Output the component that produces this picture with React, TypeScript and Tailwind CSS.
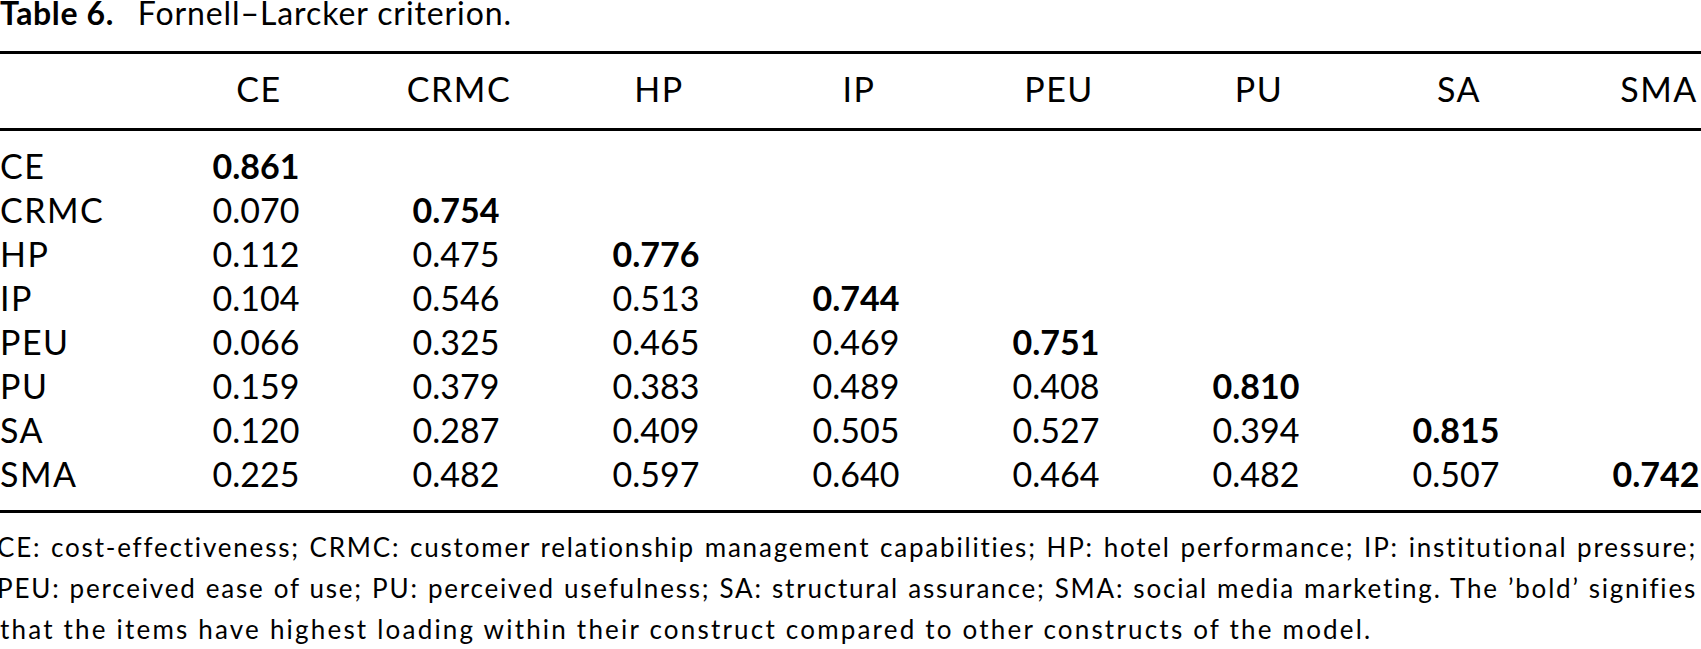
import React from "react";

const headers = ["CE", "CRMC", "HP", "IP", "PEU", "PU", "SA", "SMA"];

const rows: [string, string[]][] = [
  ["CE", ["0.861"]],
  ["CRMC", ["0.070", "0.754"]],
  ["HP", ["0.112", "0.475", "0.776"]],
  ["IP", ["0.104", "0.546", "0.513", "0.744"]],
  ["PEU", ["0.066", "0.325", "0.465", "0.469", "0.751"]],
  ["PU", ["0.159", "0.379", "0.383", "0.489", "0.408", "0.810"]],
  ["SA", ["0.120", "0.287", "0.409", "0.505", "0.527", "0.394", "0.815"]],
  ["SMA", ["0.225", "0.482", "0.597", "0.640", "0.464", "0.482", "0.507", "0.742"]],
];

export default function App() {
  return (
    <div className="w-[1701px] h-[649px] overflow-hidden bg-white text-black font-['Lato','Open_Sans',sans-serif]">
      <div className="h-[51px] leading-[26px] whitespace-nowrap">
        <span className="font-bold text-[32px] tracking-[0.6px]">Table 6.</span>
        <span className="ml-[24px] text-[32px] tracking-[0.9px]">Fornell–Larcker criterion.</span>
      </div>
      <div className="w-[1756px] h-[3px] bg-black" />
      <div className="grid grid-cols-[156px_repeat(8,200px)] pt-[13px] pb-[17px] text-[34px] leading-[44px]">
        <div />
        {headers.map((h) => (
          <div key={h} className="text-center tracking-[1.5px] pl-[6px]">
            {h}
          </div>
        ))}
      </div>
      <div className="w-[1756px] h-[3px] bg-black" />
      <div className="pt-[13px] pb-[14px] text-[34px] leading-[44px]">
        {rows.map(([label, vals]) => (
          <div key={label} className="grid grid-cols-[156px_repeat(8,200px)] h-[44px]">
            <div className="whitespace-nowrap tracking-[1.5px]">{label}</div>
            {vals.map((v, i) => (
              <div
                key={i}
                className={
                  i === vals.length - 1 ? "text-center font-bold" : "text-center"
                }
              >
                {v}
              </div>
            ))}
          </div>
        ))}
      </div>
      <div className="w-[1756px] h-[3px] bg-black" />
      <div className="pt-[14px] text-[26px] leading-[41px] tracking-[1.8px] w-[1700px] ml-[-3px]">
        <div className="text-justify [text-align-last:justify]">
          CE: cost-effectiveness; CRMC: customer relationship management capabilities; HP: hotel performance; IP: institutional pressure;
        </div>
        <div className="text-justify [text-align-last:justify]">
          PEU: perceived ease of use; PU: perceived usefulness; SA: structural assurance; SMA: social media marketing. The ’bold’ signifies
        </div>
        <div className="pl-[3px] tracking-[2.2px]">
          that the items have highest loading within their construct compared to other constructs of the model.
        </div>
      </div>
    </div>
  );
}
